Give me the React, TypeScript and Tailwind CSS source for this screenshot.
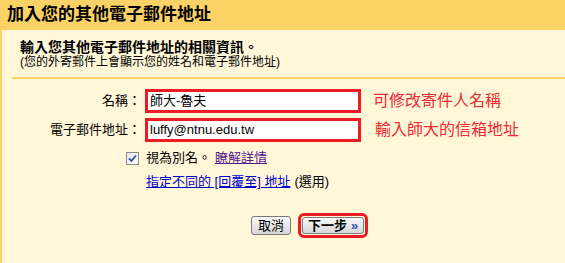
import React from 'react';

const cjk = { fontFamily: '"Liberation Sans", "Noto Sans CJK TC", sans-serif' };

function CheckBox() {
  return (
    <span className="flex h-[13px] w-[13px] items-center justify-center border border-[#8a8a8a] bg-gradient-to-br from-[#e6e6e6] to-white">
      <svg width="9" height="9" viewBox="0 0 9 9">
        <path d="M1 4.5 L3.5 7 L8 1.5" fill="none" stroke="#2c4fa3" strokeWidth="1.8" />
      </svg>
    </span>
  );
}

function FieldRow({ label, value, note, noteGap }: { label: string; value: string; note: string; noteGap: string }) {
  return (
    <div className="flex h-[24px] items-center">
      <div className="w-[139px] text-right text-[13px] text-black">{label}</div>
      <div className="ml-[4px] flex h-[24px] w-[216px] items-center border-[3px] border-[#ec1c24] bg-white pl-[2px] text-[13px] text-black">
        {value}
      </div>
      <div className={`${noteGap} text-[16px] text-[#ee2a36]`}>{note}</div>
    </div>
  );
}

export default function App() {
  return (
    <div className="h-[263px] w-[565px] overflow-hidden bg-[#fff7d8]" style={cjk}>
      <div className="flex h-[30px] items-center bg-[#fad265] pl-[7px] text-[17px] font-bold text-black">
        加入您的其他電子郵件地址
      </div>
      <div className="h-[233px] border-l-2 border-[#fad265]">
        <div className="h-[47px] pl-[18px] pt-[9px]">
          <div className="text-[14px] font-bold leading-[16px] text-black">輸入您其他電子郵件地址的相關資訊。</div>
          <div className="text-[12px] leading-[15px] text-black">(您的外寄郵件上會顯示您的姓名和電子郵件地址)</div>
        </div>
        <div className="ml-[10px] h-[2px] bg-[#fad265]" />

        <div className="mt-[10px] flex flex-col gap-[5px]">
          <FieldRow label="名稱：" value="師大-魯夫" note="可修改寄件人名稱" noteGap="ml-[12px]" />
          <FieldRow label="電子郵件地址：" value="luffy@ntnu.edu.tw" note="輸入師大的信箱地址" noteGap="ml-[14px]" />
        </div>

        <div className="mt-[8px] flex h-[16px] items-center pl-[124px] text-[13px]">
          <CheckBox />
          <span className="ml-[7px] text-black">視為別名。</span>
          <span className="ml-[4px] text-[#551a8b] underline">瞭解詳情</span>
        </div>

        <div className="mt-[8px] flex h-[16px] items-center pl-[144px] text-[13px]">
          <span className="text-[#0000cc] underline">指定不同的 [回覆至] 地址</span>
          <span className="ml-[4px] text-black">(選用)</span>
        </div>

        <div className="mt-[23px] flex h-[25px] items-center pl-[249px]">
          <button className="flex h-[19px] items-center rounded-[3px] border border-[#7a7a7a] bg-gradient-to-b from-[#fbfbfb] to-[#d6d6d6] px-[6px] text-[13px] text-black">
            取消
          </button>
          <div className="ml-[7px] flex h-[25px] items-center rounded-[6px] border-[3px] border-[#ec1c24] px-[1px]">
            <button className="flex h-[17px] items-center rounded-[3px] border border-[#7a7a7a] bg-gradient-to-b from-[#fbfbfb] to-[#d6d6d6] px-[5px] text-[13px] font-bold text-black">
              下一步
              <span className="ml-[4px] text-[#2a4fb0]">»</span>
            </button>
          </div>
        </div>
      </div>
    </div>
  );
}
